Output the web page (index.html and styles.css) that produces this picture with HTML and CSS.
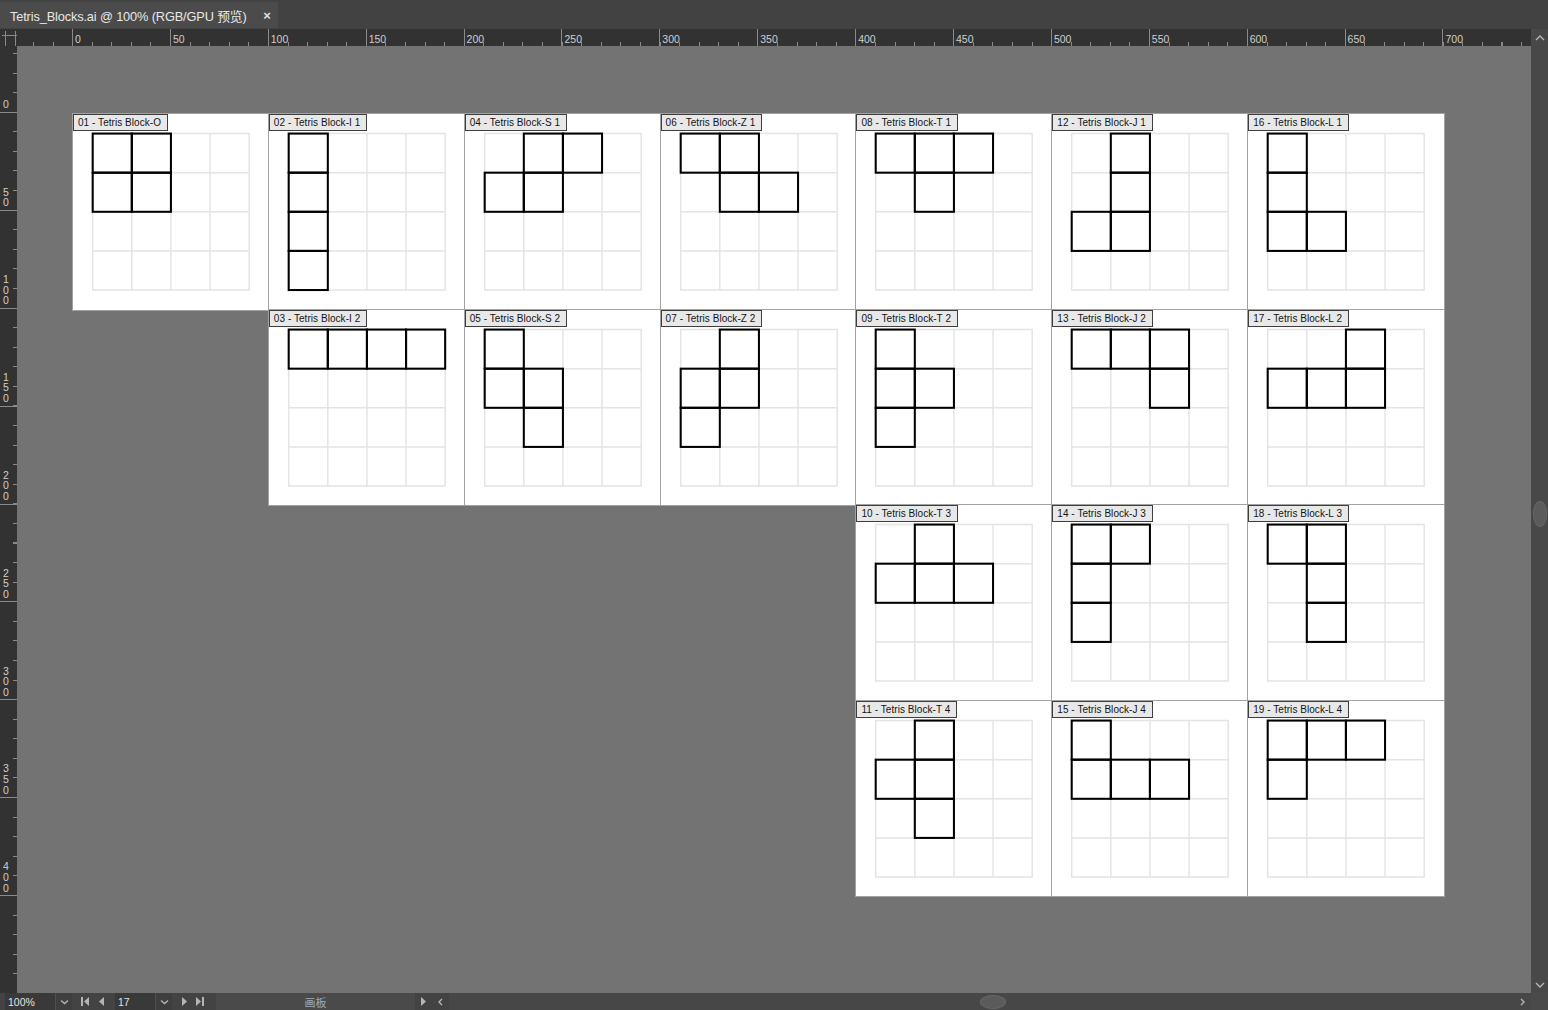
FILE: index.html
```html
<!DOCTYPE html>
<html lang="zh">
<head>
<meta charset="utf-8">
<title>Tetris_Blocks.ai</title>
<link rel="stylesheet" href="styles.css">
</head>
<body>
<svg class="defs" width="0" height="0" aria-hidden="true">
  <defs>
    <g id="grid">
      <path d="M10 10V90M30 10V90M50 10V90M70 10V90M90 10V90M10 10H90M10 30H90M10 50H90M10 70H90M10 90H90"/>
    </g>
  </defs>
</svg>
<div class="app">
  <div class="tabbar">
    <div class="tab">
      <span class="tab-title">Tetris_Blocks.ai @ 100% (RGB/GPU 预览)</span>
      <span class="tab-close">×</span>
    </div>
  </div>

  <div class="main">
    <div class="corner">
      <svg width="17" height="17" viewBox="0 0 17 17"><path d="M5.5 2V17M15.5 2V17M2 6.5H17" class="corner-lines"/></svg>
    </div>

    <div class="hruler">
      <div class="hmajor">0</div>
      <div class="hmajor">50</div>
      <div class="hmajor">100</div>
      <div class="hmajor">150</div>
      <div class="hmajor">200</div>
      <div class="hmajor">250</div>
      <div class="hmajor">300</div>
      <div class="hmajor">350</div>
      <div class="hmajor">400</div>
      <div class="hmajor">450</div>
      <div class="hmajor">500</div>
      <div class="hmajor">550</div>
      <div class="hmajor">600</div>
      <div class="hmajor">650</div>
      <div class="hmajor">700</div>
    </div>

    <div class="vscroll">
      <div class="sbtn"><svg width="10" height="6" viewBox="0 0 10 6"><path d="M1 5L5 1L9 5" class="chev"/></svg></div>
      <div class="vtrack"><div class="vthumb"></div></div>
      <div class="sbtn"><svg width="10" height="6" viewBox="0 0 10 6"><path d="M1 1L5 5L9 1" class="chev"/></svg></div>
    </div>

    <div class="vruler">
      <div class="vmajor vfirst"><span class="vlabel">0</span></div>
      <div class="vmajor"><span class="vlabel">50</span></div>
      <div class="vmajor"><span class="vlabel">100</span></div>
      <div class="vmajor"><span class="vlabel">150</span></div>
      <div class="vmajor"><span class="vlabel">200</span></div>
      <div class="vmajor"><span class="vlabel">250</span></div>
      <div class="vmajor"><span class="vlabel">300</span></div>
      <div class="vmajor"><span class="vlabel">350</span></div>
      <div class="vmajor"><span class="vlabel">400</span></div>
    </div>

    <div class="canvas">
      <div class="boards">
        <div class="board r1 c1"><span class="label">01 - Tetris Block-O</span>
          <svg class="art" viewBox="0 0 100 100"><use href="#grid" class="gridlines"/><rect class="blk" x="10" y="10" width="20" height="20"/><rect class="blk" x="30" y="10" width="20" height="20"/><rect class="blk" x="10" y="30" width="20" height="20"/><rect class="blk" x="30" y="30" width="20" height="20"/></svg></div>
        <div class="board r1 c2"><span class="label">02 - Tetris Block-I 1</span>
          <svg class="art" viewBox="0 0 100 100"><use href="#grid" class="gridlines"/><rect class="blk" x="10" y="10" width="20" height="20"/><rect class="blk" x="10" y="30" width="20" height="20"/><rect class="blk" x="10" y="50" width="20" height="20"/><rect class="blk" x="10" y="70" width="20" height="20"/></svg></div>
        <div class="board r1 c3"><span class="label">04 - Tetris Block-S 1</span>
          <svg class="art" viewBox="0 0 100 100"><use href="#grid" class="gridlines"/><rect class="blk" x="30" y="10" width="20" height="20"/><rect class="blk" x="50" y="10" width="20" height="20"/><rect class="blk" x="10" y="30" width="20" height="20"/><rect class="blk" x="30" y="30" width="20" height="20"/></svg></div>
        <div class="board r1 c4"><span class="label">06 - Tetris Block-Z 1</span>
          <svg class="art" viewBox="0 0 100 100"><use href="#grid" class="gridlines"/><rect class="blk" x="10" y="10" width="20" height="20"/><rect class="blk" x="30" y="10" width="20" height="20"/><rect class="blk" x="30" y="30" width="20" height="20"/><rect class="blk" x="50" y="30" width="20" height="20"/></svg></div>
        <div class="board r1 c5"><span class="label">08 - Tetris Block-T 1</span>
          <svg class="art" viewBox="0 0 100 100"><use href="#grid" class="gridlines"/><rect class="blk" x="10" y="10" width="20" height="20"/><rect class="blk" x="30" y="10" width="20" height="20"/><rect class="blk" x="50" y="10" width="20" height="20"/><rect class="blk" x="30" y="30" width="20" height="20"/></svg></div>
        <div class="board r1 c6"><span class="label">12 - Tetris Block-J 1</span>
          <svg class="art" viewBox="0 0 100 100"><use href="#grid" class="gridlines"/><rect class="blk" x="30" y="10" width="20" height="20"/><rect class="blk" x="30" y="30" width="20" height="20"/><rect class="blk" x="10" y="50" width="20" height="20"/><rect class="blk" x="30" y="50" width="20" height="20"/></svg></div>
        <div class="board r1 c7"><span class="label">16 - Tetris Block-L 1</span>
          <svg class="art" viewBox="0 0 100 100"><use href="#grid" class="gridlines"/><rect class="blk" x="10" y="10" width="20" height="20"/><rect class="blk" x="10" y="30" width="20" height="20"/><rect class="blk" x="10" y="50" width="20" height="20"/><rect class="blk" x="30" y="50" width="20" height="20"/></svg></div>

        <div class="board r2 c2"><span class="label">03 - Tetris Block-I 2</span>
          <svg class="art" viewBox="0 0 100 100"><use href="#grid" class="gridlines"/><rect class="blk" x="10" y="10" width="20" height="20"/><rect class="blk" x="30" y="10" width="20" height="20"/><rect class="blk" x="50" y="10" width="20" height="20"/><rect class="blk" x="70" y="10" width="20" height="20"/></svg></div>
        <div class="board r2 c3"><span class="label">05 - Tetris Block-S 2</span>
          <svg class="art" viewBox="0 0 100 100"><use href="#grid" class="gridlines"/><rect class="blk" x="10" y="10" width="20" height="20"/><rect class="blk" x="10" y="30" width="20" height="20"/><rect class="blk" x="30" y="30" width="20" height="20"/><rect class="blk" x="30" y="50" width="20" height="20"/></svg></div>
        <div class="board r2 c4"><span class="label">07 - Tetris Block-Z 2</span>
          <svg class="art" viewBox="0 0 100 100"><use href="#grid" class="gridlines"/><rect class="blk" x="30" y="10" width="20" height="20"/><rect class="blk" x="10" y="30" width="20" height="20"/><rect class="blk" x="30" y="30" width="20" height="20"/><rect class="blk" x="10" y="50" width="20" height="20"/></svg></div>
        <div class="board r2 c5"><span class="label">09 - Tetris Block-T 2</span>
          <svg class="art" viewBox="0 0 100 100"><use href="#grid" class="gridlines"/><rect class="blk" x="10" y="10" width="20" height="20"/><rect class="blk" x="10" y="30" width="20" height="20"/><rect class="blk" x="30" y="30" width="20" height="20"/><rect class="blk" x="10" y="50" width="20" height="20"/></svg></div>
        <div class="board r2 c6"><span class="label">13 - Tetris Block-J 2</span>
          <svg class="art" viewBox="0 0 100 100"><use href="#grid" class="gridlines"/><rect class="blk" x="10" y="10" width="20" height="20"/><rect class="blk" x="30" y="10" width="20" height="20"/><rect class="blk" x="50" y="10" width="20" height="20"/><rect class="blk" x="50" y="30" width="20" height="20"/></svg></div>
        <div class="board r2 c7"><span class="label">17 - Tetris Block-L 2</span>
          <svg class="art" viewBox="0 0 100 100"><use href="#grid" class="gridlines"/><rect class="blk" x="50" y="10" width="20" height="20"/><rect class="blk" x="10" y="30" width="20" height="20"/><rect class="blk" x="30" y="30" width="20" height="20"/><rect class="blk" x="50" y="30" width="20" height="20"/></svg></div>

        <div class="board r3 c5"><span class="label">10 - Tetris Block-T 3</span>
          <svg class="art" viewBox="0 0 100 100"><use href="#grid" class="gridlines"/><rect class="blk" x="30" y="10" width="20" height="20"/><rect class="blk" x="10" y="30" width="20" height="20"/><rect class="blk" x="30" y="30" width="20" height="20"/><rect class="blk" x="50" y="30" width="20" height="20"/></svg></div>
        <div class="board r3 c6"><span class="label">14 - Tetris Block-J 3</span>
          <svg class="art" viewBox="0 0 100 100"><use href="#grid" class="gridlines"/><rect class="blk" x="10" y="10" width="20" height="20"/><rect class="blk" x="30" y="10" width="20" height="20"/><rect class="blk" x="10" y="30" width="20" height="20"/><rect class="blk" x="10" y="50" width="20" height="20"/></svg></div>
        <div class="board r3 c7"><span class="label">18 - Tetris Block-L 3</span>
          <svg class="art" viewBox="0 0 100 100"><use href="#grid" class="gridlines"/><rect class="blk" x="10" y="10" width="20" height="20"/><rect class="blk" x="30" y="10" width="20" height="20"/><rect class="blk" x="30" y="30" width="20" height="20"/><rect class="blk" x="30" y="50" width="20" height="20"/></svg></div>

        <div class="board r4 c5"><span class="label">11 - Tetris Block-T 4</span>
          <svg class="art" viewBox="0 0 100 100"><use href="#grid" class="gridlines"/><rect class="blk" x="30" y="10" width="20" height="20"/><rect class="blk" x="10" y="30" width="20" height="20"/><rect class="blk" x="30" y="30" width="20" height="20"/><rect class="blk" x="30" y="50" width="20" height="20"/></svg></div>
        <div class="board r4 c6"><span class="label">15 - Tetris Block-J 4</span>
          <svg class="art" viewBox="0 0 100 100"><use href="#grid" class="gridlines"/><rect class="blk" x="10" y="10" width="20" height="20"/><rect class="blk" x="10" y="30" width="20" height="20"/><rect class="blk" x="30" y="30" width="20" height="20"/><rect class="blk" x="50" y="30" width="20" height="20"/></svg></div>
        <div class="board r4 c7"><span class="label">19 - Tetris Block-L 4</span>
          <svg class="art" viewBox="0 0 100 100"><use href="#grid" class="gridlines"/><rect class="blk" x="10" y="10" width="20" height="20"/><rect class="blk" x="30" y="10" width="20" height="20"/><rect class="blk" x="50" y="10" width="20" height="20"/><rect class="blk" x="10" y="30" width="20" height="20"/></svg></div>
      </div>
    </div>
  </div>

  <div class="status">
    <div class="field zoom-field">100%</div>
    <div class="dd"><svg width="9" height="6" viewBox="0 0 9 6"><path d="M1 1.5L4.5 4.5L8 1.5" class="chev"/></svg></div>
    <div class="nav">
      <svg width="8" height="9" viewBox="0 0 8 9"><path d="M0 0H2V9H0Z M8 0V9L3 4.5Z" class="tri"/></svg>
      <svg width="6" height="9" viewBox="0 0 6 9"><path d="M6 0V9L1 4.5Z" class="tri"/></svg>
    </div>
    <div class="field page-field">17</div>
    <div class="dd"><svg width="9" height="6" viewBox="0 0 9 6"><path d="M1 1.5L4.5 4.5L8 1.5" class="chev"/></svg></div>
    <div class="nav nav-next">
      <svg width="6" height="9" viewBox="0 0 6 9"><path d="M0 0V9L5 4.5Z" class="tri"/></svg>
      <svg width="8" height="9" viewBox="0 0 8 9"><path d="M0 0V9L5 4.5Z M6 0H8V9H6Z" class="tri"/></svg>
    </div>
    <div class="tool-field">画板</div>
    <div class="sb-small"><svg width="6" height="9" viewBox="0 0 6 9"><path d="M0 0V9L5 4.5Z" class="tri"/></svg></div>
    <div class="sb-small"><svg width="5" height="8" viewBox="0 0 5 8"><path d="M4 1L1 4L4 7" class="chev"/></svg></div>
    <div class="htrack">
      <div class="hspace"></div>
      <div class="hthumb"></div>
      <div class="hspace"></div>
      <div class="sb-small"><svg width="5" height="8" viewBox="0 0 5 8"><path d="M1 1L4 4L1 7" class="chev"/></svg></div>
    </div>
    <div class="status-corner"></div>
  </div>
</div>
</body>
</html>
```

FILE: styles.css
```css
* { box-sizing: border-box; }

html, body {
  margin: 0;
  padding: 0;
  width: 1548px;
  height: 1010px;
  overflow: hidden;
  background: #3a3a3a;
  font-family: "Liberation Sans", Arial, "Noto Sans CJK SC", sans-serif;
}

.defs {
  position: absolute;
  width: 0;
  height: 0;
  overflow: hidden;
}

.app {
  width: 1548px;
  height: 1010px;
  display: flex;
  flex-direction: column;
}

/* ---------- tab bar ---------- */
.tabbar {
  height: 29px;
  flex: 0 0 29px;
  background: #424242;
  display: flex;
  align-items: flex-end;
  padding-bottom: 1px;
}

.tab {
  width: 278px;
  height: 26px;
  background: #4b4b4b;
  display: flex;
  align-items: center;
  padding-left: 10px;
  color: #e8e8e8;
}

.tab-title {
  flex: 1;
  white-space: nowrap;
  font-size: 12.8px;
  font-family: "Liberation Sans", Arial, "Noto Sans CJK SC", sans-serif;
  letter-spacing: -0.15px;
}

.tab-close {
  width: 16px;
  margin-right: 3px;
  font-size: 13px;
  font-weight: bold;
  color: #e0e0e0;
  text-align: center;
}

/* ---------- main area ---------- */
.main {
  flex: 1;
  min-height: 0;
  display: grid;
  grid-template-columns: 17px 1fr 17px;
  grid-template-rows: 17px 1fr;
}

.corner {
  grid-column: 1;
  grid-row: 1;
  background: #323232;
}

.corner svg { display: block; }

.corner-lines {
  stroke: #8a8a8a;
  stroke-width: 1;
  fill: none;
}

.hruler {
  grid-column: 2;
  grid-row: 1;
  overflow: hidden;
  display: flex;
  padding-left: 55px;
  background:
    repeating-linear-gradient(to right, #8a8a8a 0 1px, transparent 1px 19.58px) 15.84px 13px / 100% 4px no-repeat,
    #323232;
}

.hmajor {
  flex: 0 0 97.9px;
  height: 17px;
  border-left: 1px solid #8a8a8a;
  padding: 5px 0 0 2px;
  font-size: 10.5px;
  line-height: 10.5px;
  color: #cfcfcf;
  white-space: nowrap;
}

.vruler {
  grid-column: 1;
  grid-row: 2;
  overflow: hidden;
  display: flex;
  flex-direction: column;
  background:
    repeating-linear-gradient(to bottom, #8a8a8a 0 1px, transparent 1px 19.58px) right 0 top 7.26px / 4px 100% no-repeat,
    #323232;
}

.vmajor {
  flex: 0 0 97.9px;
  border-bottom: 1px solid #8a8a8a;
  display: flex;
  flex-direction: column;
  justify-content: flex-end;
  padding: 0 0 2px 3px;
}

.vmajor.vfirst { flex-basis: 67px; }

.vlabel {
  width: 7px;
  word-break: break-all;
  font-size: 10.5px;
  line-height: 10.6px;
  color: #cfcfcf;
}

.vscroll {
  grid-column: 3;
  grid-row: 1 / span 2;
  background: #484848;
  display: flex;
  flex-direction: column;
}

.sbtn {
  flex: 0 0 17px;
  display: flex;
  align-items: center;
  justify-content: center;
}

.chev {
  fill: none;
  stroke: #b5b5b5;
  stroke-width: 1.4;
}

.tri { fill: #b5b5b5; }

.vtrack {
  flex: 1;
  display: flex;
  align-items: center;
  justify-content: center;
  padding-top: 5px;
}

.vthumb {
  width: 14px;
  height: 26px;
  border-radius: 50%;
  background: #5b5b5b;
  border: 1px solid #676767;
}

/* ---------- canvas ---------- */
.canvas {
  grid-column: 2;
  grid-row: 2;
  background: #737373;
  overflow: hidden;
  padding: 68px 0 0 56px;
}

.boards {
  display: grid;
  grid-template-columns: repeat(7, 195.86px);
  grid-template-rows: repeat(4, 195.6px);
}

.board {
  position: relative;
  background: #ffffff;
  box-shadow: 0 0 0 1px #a2a2a2;
}

.r1 { grid-row: 1; }
.r2 { grid-row: 2; }
.r3 { grid-row: 3; }
.r4 { grid-row: 4; }
.c1 { grid-column: 1; }
.c2 { grid-column: 2; }
.c3 { grid-column: 3; }
.c4 { grid-column: 4; }
.c5 { grid-column: 5; }
.c6 { grid-column: 6; }
.c7 { grid-column: 7; }

.art {
  display: block;
  width: 100%;
  height: 100%;
}

.gridlines {
  fill: none;
  stroke: #e4e4e4;
  stroke-width: 0.75;
  stroke-linecap: square;
}

.blk {
  fill: none;
  stroke: #000000;
  stroke-width: 1.05;
  stroke-linecap: square;
}

.label {
  position: absolute;
  left: 0;
  top: 0;
  height: 17px;
  padding: 0 6px 0 4px;
  background: #e8e8e8;
  border: 1px solid #3e3e3e;
  font-family: "Liberation Sans", Arial, sans-serif;
  font-size: 10px;
  letter-spacing: 0.05px;
  line-height: 15px;
  color: #141414;
  white-space: nowrap;
}

/* ---------- status bar ---------- */
.status {
  flex: 0 0 17px;
  height: 17px;
  display: flex;
  background: #434343;
  font-size: 10.5px;
  color: #e2e2e2;
}

.field {
  background: #393939;
  display: flex;
  align-items: center;
  padding-left: 3px;
  white-space: nowrap;
}

.zoom-field {
  margin-left: 5px;
  width: 50px;
}

.page-field {
  margin-left: 3px;
  width: 40px;
}

.dd {
  width: 17px;
  display: flex;
  align-items: center;
  justify-content: center;
  background: #3e3e3e;
  border-left: 1px solid #4f4f4f;
}

.nav {
  width: 40px;
  display: flex;
  align-items: center;
  justify-content: center;
  gap: 9px;
}

.nav-next {
  width: 42px;
  gap: 8px;
  margin-right: 2px;
}

.tool-field {
  width: 199px;
  background: #4a4a4a;
  display: flex;
  align-items: center;
  justify-content: center;
  color: #9aabc2;
  font-size: 11px;
  font-family: "Noto Sans CJK SC", sans-serif;
}

.sb-small {
  width: 17px;
  flex: 0 0 17px;
  display: flex;
  align-items: center;
  justify-content: center;
}

.htrack {
  flex: 1;
  display: flex;
  align-items: center;
  background: #474747;
}

.hspace { flex: 1; }

.hthumb {
  width: 26px;
  height: 14px;
  margin-left: 22px;
  border-radius: 50%;
  background: #5b5b5b;
  border: 1px solid #676767;
}

.status-corner {
  width: 17px;
  background: #4a4a4a;
}
```
